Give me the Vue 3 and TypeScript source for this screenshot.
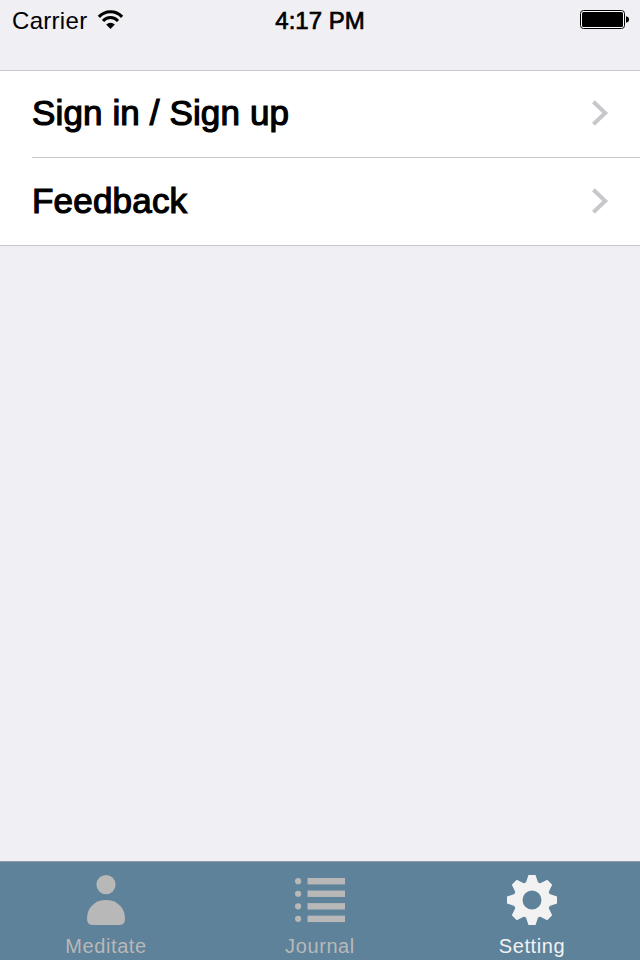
<script setup lang="ts">
interface Row { label: string; kind: string }
interface Tab { id: string; label: string; active: boolean }

const rows: Row[] = [
  { label: 'Sign in / Sign up', kind: 'account' },
  { label: 'Feedback', kind: 'feedback' },
]
const tabs: Tab[] = [
  { id: 'meditate', label: 'Meditate', active: false },
  { id: 'journal', label: 'Journal', active: false },
  { id: 'setting', label: 'Setting', active: true },
]

function polar(radius: number, degrees: number): string {
  const a = (degrees * Math.PI) / 180
  return `${(25 + radius * Math.sin(a)).toFixed(2)} ${(25 - radius * Math.cos(a)).toFixed(2)}`
}

// Eight tapered teeth joined by arcs, with a round hole in the middle.
function gearPath(): string {
  let d = ''
  for (let i = 0; i < 8; i++) {
    const c = i * 45
    d += `${i === 0 ? 'M' : 'L'}${polar(19.2, c - 17.5)}L${polar(25.3, c - 8)}L${polar(25.3, c + 8)}L${polar(19.2, c + 17.5)}`
    d += `Q${polar(17.7, c + 22.5)} ${polar(19.2, c + 27.5)}`
  }
  return d + 'ZM25 15.5a9.5 9.5 0 1 0 0 19a9.5 9.5 0 1 0 0-19Z'
}
const gear = gearPath()
const listRows = [0, 1, 2, 3]
</script>

<template>
  <div class="screen">
    <header class="status">
      <div class="carrier">
        <span class="carrier-name">Carrier</span>
        <svg class="wifi" width="26" height="20" viewBox="0 0 26 20">
          <path d="M1.9 6.8A15.8 15.8 0 0 1 25.1 6.8" fill="none" stroke="#000" stroke-width="3.2" />
          <path d="M6 10.9A10 10 0 0 1 21 10.9" fill="none" stroke="#000" stroke-width="3" />
          <path d="M9.2 14.6A6 6 0 0 1 17.8 14.6L13.5 19Z" />
        </svg>
      </div>
      <span class="time">4:17 PM</span>
      <div class="power">
        <svg width="50" height="20" viewBox="0 0 50 20">
          <rect x=".5" y=".5" width="44" height="18" rx="3" fill="#fff" stroke="#000" />
          <rect x="2" y="2" width="41" height="15" rx="1.5" />
          <path d="M46 6.2Q49 6.8 49 9.5T46 12.8Z" />
        </svg>
      </div>
    </header>

    <main class="content">
      <ul class="list">
        <li v-for="row in rows" :key="row.kind" class="row" :class="row.kind">
          <span class="row-label">{{ row.label }}</span>
          <svg class="chevron" width="18" height="28" viewBox="0 0 18 28">
            <path d="M2.4 2.7L14.2 14L2.4 25.3" fill="none" stroke="#c7c7cc" stroke-width="4" />
          </svg>
        </li>
      </ul>
    </main>

    <nav class="tabs">
      <div v-for="tab in tabs" :key="tab.id" class="tab" :class="[tab.id, { active: tab.active }]">
        <svg width="50" height="50" viewBox="0 0 50 50" fill="currentColor">
          <template v-if="tab.id === 'meditate'">
            <circle cx="25" cy="9.6" r="9.6" />
            <path d="M6 43.5C6 32.5 14 25 25 25S44 32.5 44 43.5C44 48 42 50 38 50H12C8 50 6 48 6 43.5Z" />
          </template>
          <template v-else-if="tab.id === 'journal'">
            <g v-for="n in listRows" :key="n">
              <circle cx="3.1" :cy="6.2 + n * 12.55" r="3.1" />
              <rect x="12.5" :y="3 + n * 12.55" width="37.5" height="6.4" />
            </g>
          </template>
          <path v-else :d="gear" fill-rule="evenodd" />
        </svg>
        <span class="tab-label">{{ tab.label }}</span>
      </div>
    </nav>
  </div>
</template>

<style>
body { margin: 0; background: #efeff4; }
</style>

<style scoped>
.screen {
  display: flex;
  flex-direction: column;
  width: 640px;
  height: 960px;
  overflow: hidden;
  background: #efeff4;
  color: #000;
  font-family: "Liberation Sans", Arial, sans-serif;
}
.status {
  display: grid;
  grid-template-columns: 1fr auto 1fr;
  align-items: center;
  height: 40px;
  padding: 0 10px 0 12px;
  font-size: 24px;
  line-height: 28px;
}
.carrier { display: flex; align-items: center; gap: 10px; }
.carrier-name { padding-top: 2px; letter-spacing: .3px; }
.time { padding: 2px 2px 0 0; -webkit-text-stroke: .7px #000; }
.power { display: flex; justify-content: flex-end; }
.content { flex: 1; padding-top: 30px; }
.list {
  margin: 0;
  padding: 0;
  list-style: none;
  background: #fff;
  border-top: 1px solid #c8c7cc;
  border-bottom: 1px solid #c8c7cc;
}
.row {
  box-sizing: border-box;
  display: flex;
  align-items: center;
  justify-content: space-between;
  margin-left: 32px;
  padding: 0 31px 2px 0;
}
.row + .row { border-top: 1px solid #c8c7cc; }
.account { height: 86px; }
.feedback { height: 88px; }
.row-label {
  font-size: 35px;
  line-height: 40px;
  letter-spacing: .13px;
  -webkit-text-stroke: 1.2px #000;
}
.feedback .row-label { letter-spacing: .2px; }
.tabs {
  box-sizing: border-box;
  display: grid;
  grid-template-columns: 212px 216px 208px;
  height: 99px;
  border-top: 1px solid #8f9ca5;
  background: #5e8299;
}
.tab {
  display: flex;
  flex-direction: column;
  align-items: center;
  padding-top: 13px;
  color: #b8b8b8;
}
.active { color: #f2f2f2; }
.tab-label {
  margin-top: 9px;
  font-size: 20px;
  line-height: 24px;
  letter-spacing: .6px;
}
</style>
